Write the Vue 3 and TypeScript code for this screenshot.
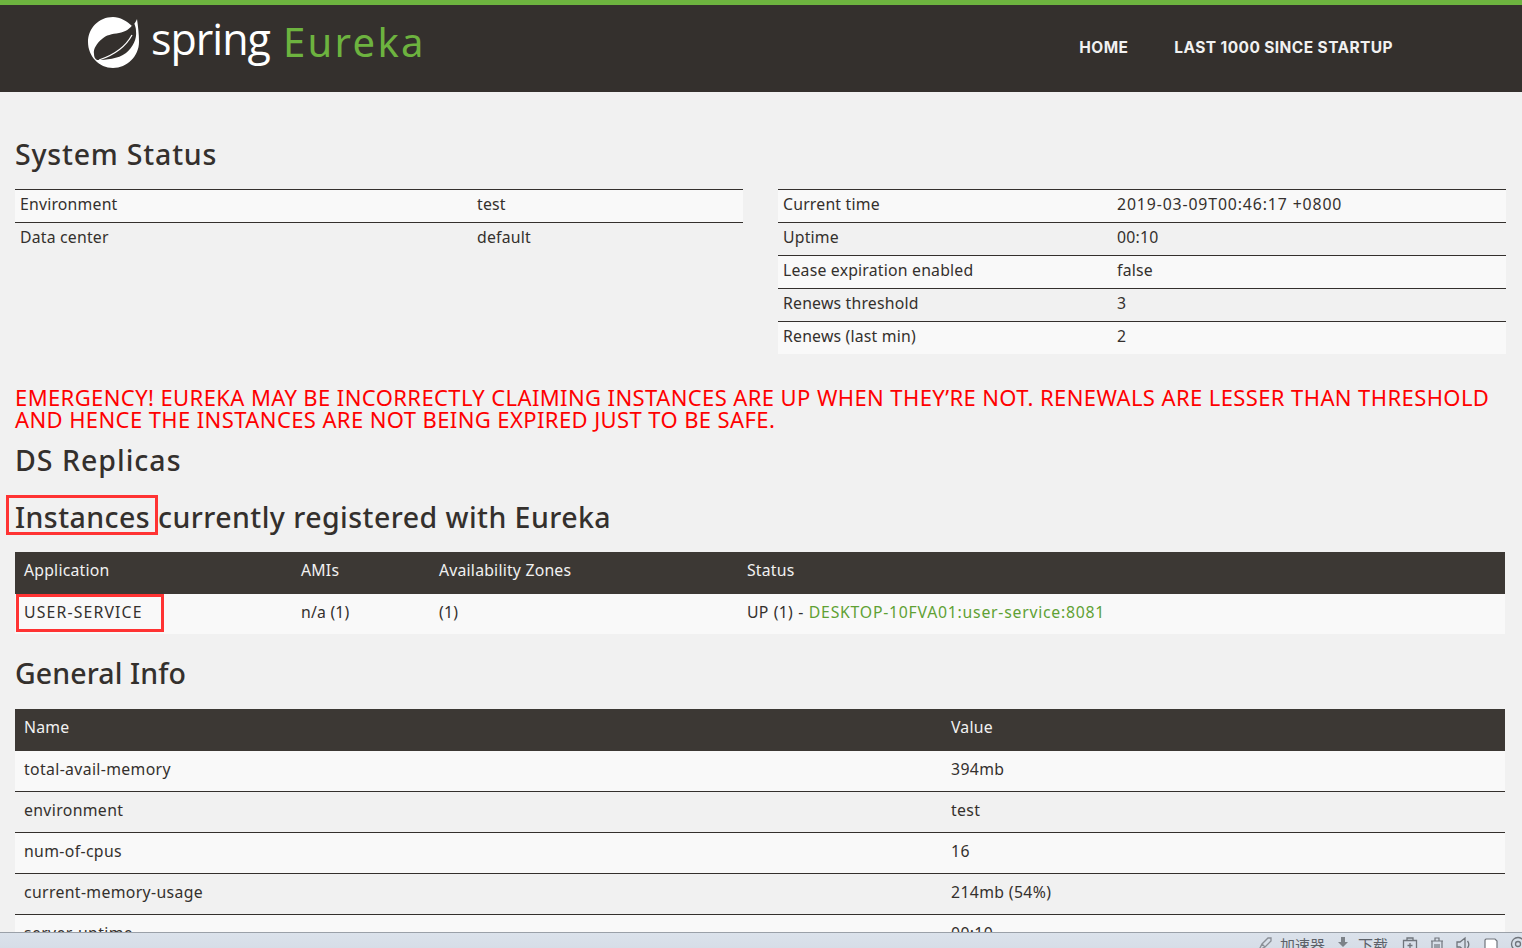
<script setup lang="ts">
const envRows = [
  ["Environment", "test"],
  ["Data center", "default"],
];
const statusRows = [
  ["Current time", "2019-03-09T00:46:17 +0800"],
  ["Uptime", "00:10"],
  ["Lease expiration enabled", "false"],
  ["Renews threshold", "3"],
  ["Renews (last min)", "2"],
];
const infoRows = [
  ["total-avail-memory", "394mb"],
  ["environment", "test"],
  ["num-of-cpus", "16"],
  ["current-memory-usage", "214mb (54%)"],
  ["server-uptime", "00:10"],
];
</script>

<template>
  <div class="page">
    <nav class="navbar">
      <div class="brand">
        <svg class="leaf" viewBox="0 0 54 54" width="54" height="54">
          <path
            fill="#fff"
            d="M50 4c-1 3-3 5-5 7C40 6 33 2 26 2 12 2 1 13 1 27s11 26 25 26 26-12 26-26c0-8-1-16-2-23z"
          />
          <path
            fill="#34302d"
            d="M47 8c-4 6-9 9-15 10-7 1-13 2-17 6-5 4-9 10-8 15 0 3 1 5 3 6 9 0 21-1 29-7 7-6 11-14 10-22 0-3-1-6-2-8z"
          />
          <path fill="none" stroke="#fff" stroke-width="1.300" d="M12 45c12-4 26-12 33-25" />
        </svg>
        <span class="spring">spring</span>
        <span class="eureka">Eureka</span>
      </div>
      <ul class="nav-links">
        <li>HOME</li>
        <li>LAST 1000 SINCE STARTUP</li>
      </ul>
    </nav>

    <main class="content">
      <h1 class="system">System Status</h1>
      <div class="status-grid">
        <table class="kv env">
          <tr v-for="row in envRows" :key="row[0]">
            <td class="env-key">{{ row[0] }}</td>
            <td>{{ row[1] }}</td>
          </tr>
        </table>
        <table class="kv">
          <tr v-for="(row, i) in statusRows" :key="row[0]">
            <td class="status-key">{{ row[0] }}</td>
            <td :class="{ stamp: i === 0 }">{{ row[1] }}</td>
          </tr>
        </table>
      </div>

      <h4 class="warning">
        EMERGENCY! EUREKA MAY BE INCORRECTLY CLAIMING INSTANCES ARE UP WHEN THEY’RE NOT. RENEWALS ARE LESSER THAN THRESHOLD AND HENCE THE INSTANCES ARE NOT BEING EXPIRED JUST TO BE SAFE.
      </h4>

      <h1 class="replicas">DS Replicas</h1>
      <h1 class="instances"><span class="marked">Instances</span> currently registered with Eureka</h1>

      <table class="data">
        <thead>
          <tr>
            <th class="col-app">Application</th>
            <th class="col-ami">AMIs</th>
            <th class="col-zone">Availability Zones</th>
            <th>Status</th>
          </tr>
        </thead>
        <tbody>
          <tr>
            <td><span class="app-box">USER-SERVICE</span></td>
            <td>n/a (1)</td>
            <td>(1)</td>
            <td class="status-cell">UP (1) - <a class="link">DESKTOP-10FVA01:user-service:8081</a></td>
          </tr>
        </tbody>
      </table>

      <h1 class="general">General Info</h1>
      <table class="data info">
        <thead>
          <tr>
            <th class="col-name">Name</th>
            <th>Value</th>
          </tr>
        </thead>
        <tbody>
          <tr v-for="row in infoRows" :key="row[0]">
            <td>{{ row[0] }}</td>
            <td>{{ row[1] }}</td>
          </tr>
        </tbody>
      </table>
    </main>

    <footer class="statusbar">
      <svg viewBox="0 0 16 16" width="16" height="16"><path d="M2 14l3-6 6-6h3v3l-6 6zM5 8l3 3" fill="none" stroke="#8a8f96" stroke-width="1.300" /></svg>
      <span class="bar-label">加速器</span>
      <svg viewBox="0 0 16 16" width="16" height="16"><path d="M6 1h4v5h3l-5 5-5-5h3zM1 12h14v3H1z" fill="#7d8288" /></svg>
      <span class="bar-label">下载</span>
      <svg class="gap" viewBox="0 0 16 16" width="16" height="16"><path d="M1.500 4.500h13v10h-13zM5 4.500V2h6v2.500M8 7v5M5.500 9.500h5" fill="none" stroke="#70757c" stroke-width="1.300" /></svg>
      <svg class="gap" viewBox="0 0 16 16" width="16" height="16"><path d="M2 5h12M3 5v10h10V5M6 5V2h4v3M6 8v5M10 8v5M8 8v5" fill="none" stroke="#70757c" stroke-width="1.200" /></svg>
      <svg class="gap" viewBox="0 0 16 16" width="16" height="16"><path d="M1 6h3l5-4v13l-5-4H1zM11.500 5c1.500 2 1.500 5 0 7" fill="none" stroke="#70757c" stroke-width="1.300" /></svg>
      <svg class="gap" viewBox="0 0 16 16" width="16" height="16"><path d="M3 3h9l2 2v10H2V4z" fill="#fff" stroke="#70757c" stroke-width="1.200" /></svg>
      <svg class="gap last" viewBox="0 0 16 16" width="16" height="16"><circle cx="8" cy="8" r="6.500" fill="none" stroke="#70757c" stroke-width="1.300" /><circle cx="8" cy="8" r="2.500" fill="none" stroke="#70757c" stroke-width="1.300" /></svg>
    </footer>
  </div>
</template>

<style>
html,
body {
  margin: 0;
  height: 100%;
  overflow: hidden;
  background: #f1f1f1;
}
</style>

<style scoped>
.page {
  position: relative;
  height: 948px;
  overflow: hidden;
  background: #f1f1f1;
  color: #34302d;
  font-family: "Noto Sans", "Open Sans", sans-serif;
  font-size: 15.800px;
  letter-spacing: 0.2px;
}

/* top bar */
.navbar {
  height: 87px;
  border-top: 5px solid #6db33f;
  background: #34302d;
  display: flex;
  justify-content: space-between;
  padding: 0 129px 0 87px;
}

.brand {
  display: flex;
  align-items: center;
  height: 73px;
}

.leaf {
  margin-top: 1px;
}

.spring {
  margin: 0 0 6px 10px;
  color: #fff;
  font-family: "Open Sans", sans-serif;
  font-size: 43px;
  font-weight: 500;
  letter-spacing: -1px;
}

.eureka {
  margin-left: 13px;
  color: #6db33f;
  font-family: "Noto Sans", sans-serif;
  font-size: 40px;
  letter-spacing: 2.300px;
}

.nav-links {
  list-style: none;
  margin: 0;
  padding: 0;
  display: flex;
  gap: 46px;
  align-items: center;
  height: 84px;
  color: #f1f1f1;
  font-family: Inter, sans-serif;
  font-size: 15.500px;
  font-weight: 700;
  letter-spacing: 0.4px;
}

/* main column */
.content {
  padding: 0 16px 0 15px;
}

h1 {
  margin: 0;
  font-size: 28.500px;
  font-weight: 500;
  line-height: 36px;
  letter-spacing: 0.600px;
}

.system {
  padding-top: 44px;
  letter-spacing: 0.800px;
}

.status-grid {
  display: grid;
  grid-template-columns: 728px 728px;
  gap: 35px;
  margin-top: 17px;
  height: 198px;
  align-items: start;
}

table {
  border-collapse: collapse;
  width: 100%;
  table-layout: fixed;
}

.kv td {
  height: 28px;
  padding: 0 5px 4px;
  border-top: 1px solid #34302d;
}

.kv tr:nth-child(odd) td {
  background: #f9f9f9;
}

.stamp {
  letter-spacing: 0.880px;
}

.env-key {
  width: 447px;
}

.status-key {
  width: 324px;
}

.warning {
  margin: -1px 0 0;
  color: #f00;
  font-size: 22px;
  font-weight: 400;
  line-height: 22px;
  letter-spacing: 0.400px;
}

.replicas {
  margin-top: 12px;
  letter-spacing: 1px;
}

.instances {
  margin-top: 21px;
  letter-spacing: 0.450px;
}

.marked {
  position: relative;
}

.marked::after {
  content: "";
  position: absolute;
  left: -9px;
  top: -3px;
  right: -8px;
  bottom: 1px;
  border: 3px solid #f33;
}

.data {
  margin-top: 17px;
  width: 1490px;
}

.data th {
  height: 36px;
  padding: 0 9px 6px;
  background: #3c3834;
  color: #f1f1f1;
  font-weight: 400;
  text-align: left;
}

.data td {
  height: 36px;
  padding: 0 9px 4px;
}

.data tbody tr:nth-child(odd) td {
  background: #f9f9f9;
}

.col-app {
  width: 259px;
}

.col-ami {
  width: 120px;
}

.col-zone {
  width: 290px;
}

.app-box {
  position: relative;
  letter-spacing: 1.150px;
}

.app-box::after {
  content: "";
  position: absolute;
  left: -8px;
  top: -7px;
  right: -21px;
  bottom: -9px;
  border: 3px solid #f33;
}

.status-cell {
  word-spacing: 1px;
}

.link {
  color: #5fa134;
  letter-spacing: 0.750px;
}

.general {
  margin-top: 21px;
  letter-spacing: 0.100px;
}

.info {
  margin-top: 18px;
}

.col-name {
  width: 909px;
}

.info td {
  height: 36px;
  border-bottom: 1px solid #34302d;
  letter-spacing: 0.350px;
}

/* browser status bar lying over the page */
.statusbar {
  position: absolute;
  left: 0;
  right: 0;
  bottom: 0;
  height: 16px;
  box-sizing: border-box;
  display: flex;
  align-items: flex-start;
  justify-content: flex-end;
  gap: 7px;
  padding: 3px 0 0;
  overflow: hidden;
  border-top: 1px solid #9aa0a8;
  background: linear-gradient(#dbe2eb, #d6dde7);
  color: #5c6168;
  letter-spacing: 0;
}

.bar-label {
  font-family: "Noto Sans CJK SC", sans-serif;
  font-size: 15px;
  line-height: 18px;
  margin-right: 3px;
}

.statusbar svg {
  flex: none;
}

.gap {
  margin-left: 4px;
}

.last {
  margin-right: -4px;
}
</style>
